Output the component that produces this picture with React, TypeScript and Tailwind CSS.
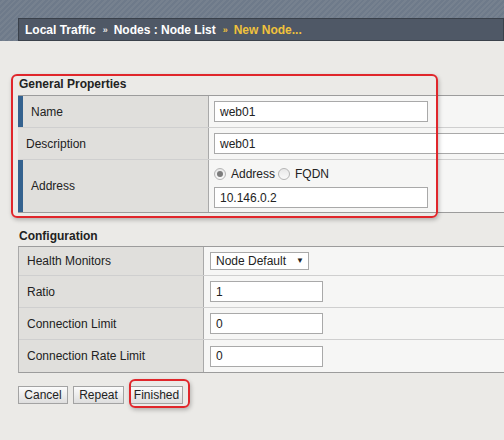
import React from "react";

const font = { fontFamily: '"Liberation Sans", Arial, sans-serif' };

const Label = ({ text, bar, h }: { text: string; bar?: boolean; h: string }) => (
    <div
        className={`flex items-center shrink-0 bg-[#e0dfdc] border-r border-r-[#a9a9a9] text-[12px] text-[#222] ${h} ${
            bar ? "border-l-[5px] border-l-[#34628f] pl-[8px]" : "pl-[8px]"
        }`}
    >
        {text}
    </div>
);

const TextInput = ({ value, w }: { value: string; w: string }) => (
    <div
        className={`${w} h-[21px] bg-white border border-[#a9a9a9] flex items-center pl-[5px] text-[12px] text-[#222]`}
    >
        {value}
    </div>
);

const Radio = ({ on }: { on?: boolean }) => (
    <span className="w-[12px] h-[12px] rounded-full border border-[#b5b5b5] bg-gradient-to-b from-[#e8e8e8] to-[#fafafa] flex items-center justify-center">
        {on && <span className="w-[6px] h-[6px] rounded-full bg-[#7c7c7c]" />}
    </span>
);

const Btn = ({ text, w }: { text: string; w: string }) => (
    <div
        className={`${w} h-[18px] border border-[#a3a3a3] bg-gradient-to-b from-[#fbfbfb] to-[#dedede] flex items-center justify-center text-[12px] text-[#222]`}
    >
        {text}
    </div>
);

export default function App() {
    return (
        <div
            className="relative w-[504px] h-[440px] overflow-hidden bg-[#ebeae7]"
            style={font}
        >
            {/* top banner */}
            <div className="h-[41px] pt-[18px] pl-[18px] bg-[repeating-linear-gradient(135deg,#6e7a8a_0px,#6e7a8a_2px,#76818f_2px,#76818f_4px)]">
                <div className="h-[23px] bg-[#4f5866] border border-[#3a414b] flex items-center pl-[6px] text-[12px] font-bold text-white">
                    <span>Local Traffic</span>
                    <span className="text-[9px] text-[#e8e8e8] mx-[7px] mt-[3px] tracking-[-1px]">››</span>
                    <span>Nodes : Node List</span>
                    <span className="text-[9px] text-[#f0c23c] mx-[7px] mt-[3px] tracking-[-1px]">››</span>
                    <span className="text-[#f0c23c]">New Node...</span>
                </div>
            </div>

            {/* general properties */}
            <div className="pl-[19px] mt-[35px] h-[16px] leading-[16px] text-[12px] font-bold text-[#222]">
                General Properties
            </div>
            <div className="ml-[18px] mt-[3px] w-[560px] border-y border-y-[#9c9c9c]">
                <div className="flex border-b border-b-[#cfcfcf]">
                    <Label text="Name" bar h="w-[191px] h-[31px]" />
                    <div className="flex-1 bg-[#f6f6f5] flex items-center pl-[5px]">
                        <TextInput value="web01" w="w-[214px]" />
                    </div>
                </div>
                <div className="flex border-b border-b-[#cfcfcf]">
                    <Label text="Description" h="w-[191px] h-[31px]" />
                    <div className="flex-1 bg-[#f6f6f5] flex items-center pl-[5px]">
                        <TextInput value="web01" w="w-[330px]" />
                    </div>
                </div>
                <div className="flex">
                    <Label text="Address" bar h="w-[191px] h-[52px]" />
                    <div className="flex-1 bg-[#f6f6f5] flex flex-col justify-center pl-[5px] gap-[3px]">
                        <div className="flex items-center text-[12px] text-[#222] h-[20px]">
                            <Radio on />
                            <span className="ml-[5px] mr-[3px]">Address</span>
                            <Radio />
                            <span className="ml-[5px]">FQDN</span>
                        </div>
                        <TextInput value="10.146.0.2" w="w-[214px]" />
                    </div>
                </div>
            </div>

            {/* configuration */}
            <div className="pl-[19px] mt-[15px] h-[16px] leading-[16px] text-[12px] font-bold text-[#222]">
                Configuration
            </div>
            <div className="ml-[18px] mt-[2px] w-[560px] border-y border-y-[#9c9c9c] border-l border-l-[#a9a9a9]">
                <div className="flex border-b border-b-[#cfcfcf]">
                    <Label text="Health Monitors" h="w-[185px] h-[28px]" />
                    <div className="flex-1 bg-[#f6f6f5] flex items-center pl-[6px]">
                        <div className="w-[99px] h-[18px] bg-white border border-[#a9a9a9] flex items-center pl-[5px] text-[12px] text-[#222]">
                            Node Default
                            <span className="ml-[10px] text-[8px]">▼</span>
                        </div>
                    </div>
                </div>
                <div className="flex border-b border-b-[#cfcfcf]">
                    <Label text="Ratio" h="w-[185px] h-[31px]" />
                    <div className="flex-1 bg-[#f6f6f5] flex items-center pl-[6px]">
                        <TextInput value="1" w="w-[113px]" />
                    </div>
                </div>
                <div className="flex border-b border-b-[#cfcfcf]">
                    <Label text="Connection Limit" h="w-[185px] h-[31px]" />
                    <div className="flex-1 bg-[#f6f6f5] flex items-center pl-[6px]">
                        <TextInput value="0" w="w-[113px]" />
                    </div>
                </div>
                <div className="flex">
                    <Label text="Connection Rate Limit" h="w-[185px] h-[32px]" />
                    <div className="flex-1 bg-[#f6f6f5] flex items-center pl-[6px]">
                        <TextInput value="0" w="w-[113px]" />
                    </div>
                </div>
            </div>

            {/* buttons */}
            <div className="flex ml-[18px] mt-[13px] gap-[5px]">
                <Btn text="Cancel" w="w-[50px]" />
                <Btn text="Repeat" w="w-[51px]" />
                <Btn text="Finished" w="w-[53px] ml-[1px]" />
            </div>

            {/* annotation boxes */}
            <div className="absolute left-[11px] top-[74px] w-[427px] h-[144px] border-2 border-[#e0262b] rounded-[6px] shadow-[1px_2px_4px_rgba(0,0,0,0.25)]" />
            <div className="absolute left-[129px] top-[379px] w-[61px] h-[29px] border-2 border-[#e0262b] rounded-[6px] shadow-[1px_2px_4px_rgba(0,0,0,0.25)]" />
        </div>
    );
}
